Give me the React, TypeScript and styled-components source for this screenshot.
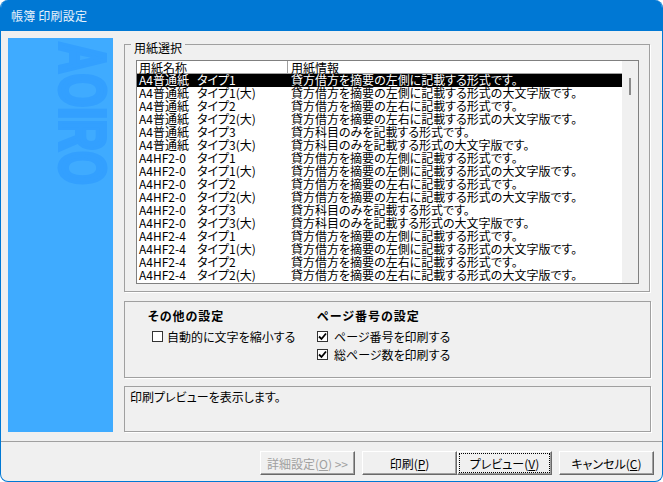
import React from "react";
import styled, { createGlobalStyle } from "styled-components";

const papers = ["A4普通紙", "A4HF2-0", "A4HF2-4"];
const kinds = [
  { name: "タイプ1", info: "貸方借方を摘要の左側に記載する形式です。" },
  { name: "タイプ1(大)", info: "貸方借方を摘要の左側に記載する形式の大文字版です。" },
  { name: "タイプ2", info: "貸方借方を摘要の左右に記載する形式です。" },
  { name: "タイプ2(大)", info: "貸方借方を摘要の左右に記載する形式の大文字版です。" },
  { name: "タイプ3", info: "貸方科目のみを記載する形式です。" },
  { name: "タイプ3(大)", info: "貸方科目のみを記載する形式の大文字版です。" },
];
const rows = papers
  .flatMap((paper) => kinds.map((k) => ({ paper, name: k.name, info: k.info })))
  .slice(0, 16);

function Check({ checked }: { checked?: boolean }) {
  return (
    <CheckBox>
      {checked && (
        <svg width="11" height="11" viewBox="0 0 11 11">
          <path d="M2 5.5 L4.5 8 L9 2.5" fill="none" stroke="#000" strokeWidth="1.8" />
        </svg>
      )}
    </CheckBox>
  );
}

function App() {
  return (
    <Win>
      <GlobalStyle />
      <TitleBar>帳簿 印刷設定</TitleBar>
      <Body>
        <Sidebar>
          <Watermark>AOIRO</Watermark>
        </Sidebar>
        <Main>
          <Group>
            <Legend>用紙選択</Legend>
            <ListFrame>
              <ListInner>
                <ListHead>
                  <NameCol>用紙名称</NameCol>
                  <InfoCol $line>用紙情報</InfoCol>
                </ListHead>
                {rows.map((r, i) => (
                  <Row key={i} $selected={i === 0}>
                    <NameCol>
                      <Paper>{r.paper}</Paper>
                      {r.name}
                    </NameCol>
                    <InfoCol>{r.info}</InfoCol>
                  </Row>
                ))}
              </ListInner>
              <ScrollTrack>
                <ScrollThumb />
              </ScrollTrack>
            </ListFrame>
          </Group>
          <SettingsPanel>
            <SettingsCol $width={169}>
              <SettingsTitle>その他の設定</SettingsTitle>
              <CheckRow $indent={4} $gap={4}>
                <Check />
                自動的に文字を縮小する
              </CheckRow>
            </SettingsCol>
            <SettingsCol>
              <SettingsTitle>ページ番号の設定</SettingsTitle>
              <CheckRow>
                <Check checked />
                ページ番号を印刷する
              </CheckRow>
              <CheckRow>
                <Check checked />
                総ページ数を印刷する
              </CheckRow>
            </SettingsCol>
          </SettingsPanel>
          <MessagePanel>印刷プレビューを表示します。</MessagePanel>
        </Main>
      </Body>
      <Footer>
        <Button $disabled>
          詳細設定(<u>O</u>) &gt;&gt;
        </Button>
        <Pair>
          <Button>
            印刷(<u>P</u>)
          </Button>
          <Button $focus>
            プレビュー(<u>V</u>)
          </Button>
        </Pair>
        <Button>
          キャンセル(<u>C</u>)
        </Button>
      </Footer>
    </Win>
  );
}

export default App;

const GlobalStyle = createGlobalStyle`
  html, body {
    margin: 0;
    padding: 0;
    background: #fff;
  }
  * {
    box-sizing: border-box;
  }
`;
const Win = styled.div`
  width: 663px;
  height: 482px;
  display: flex;
  flex-direction: column;
  background: #f0f0f0;
  border: 1px solid #0078d4;
  border-top: 0;
  border-radius: 8px;
  overflow: hidden;
  color: #000;
  font-family: "Noto Sans CJK JP", "Liberation Sans", sans-serif;
  font-size: 12px;
  font-feature-settings: "palt";
`;
const TitleBar = styled.div`
  height: 31px;
  margin: 0 -1px;
  padding: 0 0 1px 11px;
  display: flex;
  align-items: center;
  background: #0078d4;
  color: #e8f3fc;
  font-size: 12px;
  letter-spacing: 0.2px;
`;
const Body = styled.div`
  height: 411px;
  display: flex;
  padding: 7px 11px 0 7px;
  gap: 11px;
  border-bottom: 1px solid #a0a0a0;
`;
const Sidebar = styled.div`
  position: relative;
  width: 105px;
  height: 394px;
  background: #3fabff;
  overflow: hidden;
`;
const Watermark = styled.div`
  position: absolute;
  left: 47px;
  top: 4px;
  height: 215px;
  writing-mode: vertical-rl;
  font-family: "Liberation Sans", sans-serif;
  font-weight: 700;
  font-size: 65px;
  line-height: 54px;
  color: #33a0ff;
  -webkit-text-stroke: 4px #33a0ff;
  transform: scaleY(0.67);
  transform-origin: top left;
`;
const Main = styled.div`
  flex: 1;
  display: flex;
  flex-direction: column;
`;
const Group = styled.div`
  position: relative;
  height: 248px;
  margin: 6px 1px 0 0;
  padding: 15px 10px 0 11px;
  border: 1px solid #a0a0a0;
  box-shadow: 1px 1px 0 #fff;
`;
const Legend = styled.div`
  position: absolute;
  left: 6px;
  top: -4px;
  padding: 0 3px;
  line-height: 14px;
  background: #f0f0f0;
`;
const ListFrame = styled.div`
  display: flex;
  width: 503px;
  height: 224px;
  border: 1px solid #808080;
  background: #fff;
`;
const ListInner = styled.div`
  width: 485px;
`;
const ListHead = styled.div`
  display: flex;
  height: 13px;
  border-bottom: 1px solid #a0a0a0;
`;
const NameCol = styled.div`
  width: 150px;
  padding-left: 2px;
  line-height: 13px;
  white-space: nowrap;
`;
const InfoCol = styled.div<{ $line?: boolean }>`
  flex: 1;
  padding-left: 3px;
  line-height: 13px;
  white-space: nowrap;
  border-left: 1px solid ${(p) => (p.$line ? "#a0a0a0" : "transparent")};
`;
const Row = styled.div<{ $selected?: boolean }>`
  display: flex;
  height: 13px;
  background: ${(p) => (p.$selected ? "#000" : "transparent")};
  color: ${(p) => (p.$selected ? "#fff" : "#000")};
  > div {
    line-height: 11px;
  }
`;
const Paper = styled.span`
  display: inline-block;
  width: 58px;
`;
const ScrollTrack = styled.div`
  flex: 1;
  padding: 17px 0 0 7px;
  background: #f0f0f0;
`;
const ScrollThumb = styled.div`
  width: 2px;
  height: 17px;
  background: #8a8a8a;
`;
const SettingsPanel = styled.div`
  display: flex;
  height: 77px;
  margin-top: 9px;
  padding: 7px 0 0 23px;
  border: 1px solid #a0a0a0;
  box-shadow: 1px 1px 0 #fff;
`;
const SettingsCol = styled.div<{ $width?: number }>`
  width: ${(p) => (p.$width ? `${p.$width}px` : "auto")};
  display: flex;
  flex-direction: column;
`;
const SettingsTitle = styled.div`
  height: 17px;
  line-height: 14px;
  font-weight: 700;
  letter-spacing: 1px;
  margin-bottom: 1px;
`;
const CheckRow = styled.div<{ $indent?: number; $gap?: number }>`
  display: flex;
  align-items: center;
  height: 18px;
  gap: ${(p) => p.$gap ?? 6}px;
  padding-left: ${(p) => p.$indent ?? 0}px;
`;
const CheckBox = styled.span`
  width: 11px;
  height: 11px;
  flex: none;
  display: inline-block;
  border: 1px solid #333;
  background: #fff;
  svg {
    display: block;
    margin: -1px;
  }
`;
const MessagePanel = styled.div`
  height: 46px;
  margin-top: 8px;
  padding: 2px 5px;
  line-height: 16px;
  border: 1px solid #a0a0a0;
  box-shadow: 1px 1px 0 #fff;
`;
const Footer = styled.div`
  flex: 1;
  display: flex;
  justify-content: flex-end;
  gap: 7px;
  padding: 9px 8px 0 0;
`;
const Pair = styled.div`
  display: flex;
`;
const Button = styled.div<{ $disabled?: boolean; $focus?: boolean }>`
  position: relative;
  width: 95px;
  height: 24px;
  display: flex;
  align-items: center;
  justify-content: center;
  background: #f0f0f0;
  color: ${(p) => (p.$disabled ? "#a0a0a0" : "#000")};
  border: 1px solid;
  border-color: #fff #696969 #696969 #fff;
  box-shadow: inset -1px -1px 0 #a0a0a0;
  outline: ${(p) => (p.$focus ? "1px dotted #000" : "none")};
  outline-offset: -3px;
`;
